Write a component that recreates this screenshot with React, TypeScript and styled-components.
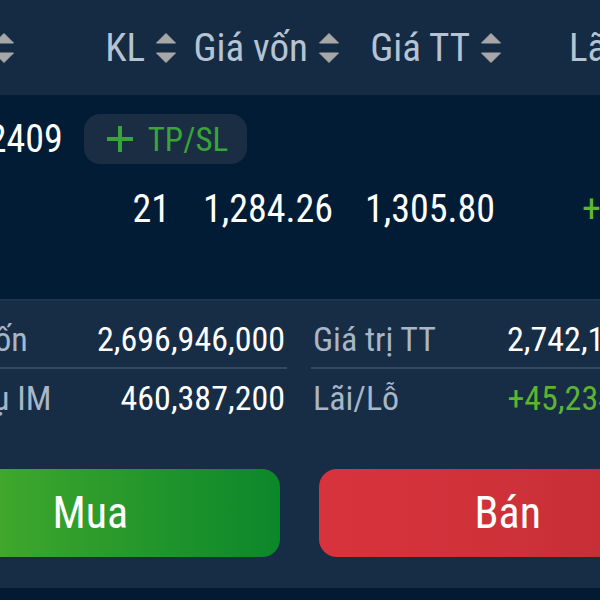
import React from "react";
import styled, { createGlobalStyle } from "styled-components";

const GlobalStyle = createGlobalStyle`
  html, body { margin: 0; padding: 0; background: #172d46; }
  body { font-family: "Roboto Condensed", Roboto, "Liberation Sans", sans-serif; font-stretch: condensed; }
  * { box-sizing: border-box; }
`;

const Viewport = styled.div`
  width: 600px;
  height: 600px;
  overflow: hidden;
  background: #172d46;
`;

const Canvas = styled.div`
  width: 878px;
  margin-left: -140px;
  display: flex;
  flex-direction: column;
`;

const COLS = "113px 162px 163px 162px 1fr";

const HeaderBar = styled.div`
  height: 95px;
  background: #152b44;
  display: grid;
  grid-template-columns: ${COLS};
  align-items: center;
  padding: 0 0 0 41px;
`;

const HeaderCell = styled.div<{ $align?: "left" }>`
  display: flex;
  justify-content: ${(p) => (p.$align === "left" ? "flex-start" : "flex-end")};
  align-items: center;
  gap: 11px;
  padding-left: ${(p) => (p.$align === "left" ? "68px" : "0")};
  font-size: 39px;
  color: #b6c3d2;
  white-space: nowrap;
`;

const SortSvg = styled.svg`
  width: 20px;
  height: 30px;
  flex: none;
`;

const SortIcon = () => (
  <SortSvg viewBox="0 0 20 30">
    <path d="M10 0.5 L19.5 10 L0.5 10 Z" fill="#a7a7a7" stroke="#a7a7a7" strokeWidth="1" strokeLinejoin="round" />
    <path d="M10 29.5 L19.5 20 L0.5 20 Z" fill="#a7a7a7" stroke="#a7a7a7" strokeWidth="1" strokeLinejoin="round" />
  </SortSvg>
);

const PositionSection = styled.div`
  height: 204px;
  background: #021c36;
  padding: 19px 0 0 27px;
  display: flex;
  flex-direction: column;
  gap: 20px;
`;

const SymbolLine = styled.div`
  display: flex;
  align-items: center;
  gap: 21px;
  height: 50px;
`;

const Symbol = styled.span`
  font-size: 38px;
  color: #ffffff;
`;

const TpSlButton = styled.button`
  height: 50px;
  border: none;
  border-radius: 16px;
  background: #1b2d43;
  display: flex;
  align-items: center;
  gap: 15px;
  padding: 0 19px 0 23px;
  font-family: inherit;
  font-stretch: inherit;
  font-size: 33px;
  color: #37a537;
`;

const PlusSvg = styled.svg`
  width: 26px;
  height: 26px;
`;

const DataLine = styled.div`
  display: grid;
  grid-template-columns: ${COLS};
  height: 50px;
  align-items: center;
  margin-left: 14px;
`;

const DataCell = styled.div<{ $tone?: "up"; $align?: "left" }>`
  text-align: ${(p) => (p.$align === "left" ? "left" : "right")};
  padding-right: 6px;
  padding-left: ${(p) => (p.$align === "left" ? "81px" : "0")};
  font-size: 38px;
  color: ${(p) => (p.$tone === "up" ? "#5cb82c" : "#ffffff")};
  white-space: nowrap;
`;

const Summary = styled.div`
  border-top: 2px solid #1e3450;
  background: #172d46;
  display: grid;
  grid-template-columns: 1fr 1fr;
  column-gap: 24px;
  padding: 9px 41px 0;
`;

const SummaryCol = styled.div`
  display: flex;
  flex-direction: column;
`;

const SummaryRow = styled.div`
  height: 57px;
  display: flex;
  align-items: center;
  justify-content: space-between;
  padding-right: 2px;
`;

const Divider = styled.div`
  height: 2px;
  background: #33495f;
`;

const Label = styled.span<{ $shift?: number }>`
  font-size: 34px;
  color: #a8b6c6;
  margin-left: ${(p) => p.$shift ?? 0}px;
`;

const Value = styled.span<{ $tone?: "up"; $trail?: number }>`
  font-size: 34px;
  color: ${(p) => (p.$tone === "up" ? "#5db42e" : "#ffffff")};
  margin-right: ${(p) => p.$trail ?? 0}px;
`;

const Actions = styled.div`
  display: grid;
  grid-template-columns: 1fr 1fr;
  gap: 39px;
  padding: 43px 41px 31px;
  background: #172d46;
`;

const ActionButton = styled.button<{ $kind: "buy" | "sell" }>`
  height: 88px;
  border: none;
  border-radius: 18px;
  font-family: inherit;
  font-stretch: inherit;
  font-size: 44px;
  font-weight: 400;
  color: #ffffff;
  background: ${(p) =>
    p.$kind === "buy"
      ? "linear-gradient(90deg, #62b531 0%, #3ca52c 30%, #0b872b 100%)"
      : "linear-gradient(90deg, #d8333d 0%, #ce3139 50%, #bf2b33 100%)"};
`;

const BottomBand = styled.div`
  height: 40px;
  background: #031b32;
`;

export default function App() {
  return (
    <>
      <GlobalStyle />
      <Viewport>
        <Canvas>
          <HeaderBar>
            <HeaderCell>
              Mã <SortIcon />
            </HeaderCell>
            <HeaderCell>
              KL <SortIcon />
            </HeaderCell>
            <HeaderCell>
              Giá vốn <SortIcon />
            </HeaderCell>
            <HeaderCell>
              Giá TT <SortIcon />
            </HeaderCell>
            <HeaderCell $align="left">
              Lãi/Lỗ <SortIcon />
            </HeaderCell>
          </HeaderBar>

          <PositionSection>
            <SymbolLine>
              <Symbol>VN30F2409</Symbol>
              <TpSlButton>
                <PlusSvg viewBox="0 0 26 26">
                  <path d="M13 0 V26 M0 13 H26" stroke="#37a537" strokeWidth="4" />
                </PlusSvg>
                TP/SL
              </TpSlButton>
            </SymbolLine>
            <DataLine>
              <DataCell />
              <DataCell>21</DataCell>
              <DataCell>1,284.26</DataCell>
              <DataCell>1,305.80</DataCell>
              <DataCell $tone="up" $align="left">+452.34</DataCell>
            </DataLine>
          </PositionSection>

          <Summary>
            <SummaryCol>
              <SummaryRow>
                <Label $shift={-9}>Giá trị vốn</Label>
                <Value>2,696,946,000</Value>
              </SummaryRow>
              <Divider />
              <SummaryRow>
                <Label $shift={-9}>Nghĩa vụ IM</Label>
                <Value>460,387,200</Value>
              </SummaryRow>
            </SummaryCol>
            <SummaryCol>
              <SummaryRow>
                <Label $shift={2}>Giá trị TT</Label>
                <Value>2,742,180,000</Value>
              </SummaryRow>
              <Divider />
              <SummaryRow>
                <Label $shift={2}>Lãi/Lỗ</Label>
                <Value $tone="up" $trail={23}>+45,234,000</Value>
              </SummaryRow>
            </SummaryCol>
          </Summary>

          <Actions>
            <ActionButton $kind="buy">Mua</ActionButton>
            <ActionButton $kind="sell">Bán</ActionButton>
          </Actions>
          <BottomBand />
        </Canvas>
      </Viewport>
    </>
  );
}
